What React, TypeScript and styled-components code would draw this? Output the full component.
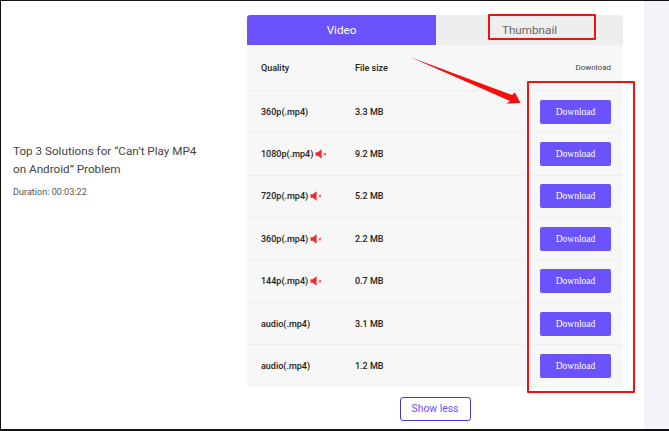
import React from "react";
import styled, { createGlobalStyle } from "styled-components";

const Global = createGlobalStyle`
  html, body { margin: 0; padding: 0; background: #fff; }
  * { box-sizing: border-box; }
`;

const Frame = styled.div`
  position: relative;
  width: 669px;
  height: 431px;
  overflow: hidden;
  display: flex;
  background: #fff;
  border-top: 1px solid #111;
  border-left: 1px solid #111;
  border-bottom: 2px solid #111;
  font-family: Roboto, "Liberation Sans", sans-serif;
`;

const Info = styled.div`
  width: 246px;
  flex: none;
  padding: 142px 40px 0 12px;
`;

const Title = styled.div`
  font-size: 11.7px;
  line-height: 17.5px;
  color: #444;
`;

const Duration = styled.div`
  margin-top: 8px;
  font-size: 9.1px;
  line-height: 12px;
  color: #555;
`;

const Main = styled.div`
  width: 376px;
  flex: none;
  padding-top: 14px;
  display: flex;
  flex-direction: column;
`;

const Tabs = styled.div`
  display: flex;
  height: 30px;
  border-radius: 3px 3px 0 0;
  overflow: hidden;
`;

const Tab = styled.div<{ $active?: boolean }>`
  flex: none;
  width: ${(p) => (p.$active ? "189px" : "187px")};
  display: flex;
  align-items: center;
  justify-content: center;
  font-size: 11.7px;
  color: ${(p) => (p.$active ? "#fff" : "#666")};
  background: ${(p) => (p.$active ? "#6a52fd" : "#eeeeee")};
`;

const Table = styled.div`
  background: #f7f7f7;
  border-radius: 0 0 3px 3px;
`;

const Row = styled.div<{ $head?: boolean }>`
  display: grid;
  grid-template-columns: 94px 1fr auto;
  align-items: center;
  height: ${(p) => (p.$head ? "45px" : "42.4px")};
  padding: 0 12px 0 14px;
  font-size: 9px;
  font-weight: 500;
  color: #222;
  border-top: ${(p) => (p.$head ? "none" : "1px solid #efefef")};
`;

const Quality = styled.div`
  display: flex;
  align-items: center;
  gap: 2px;
`;

const HeadAction = styled.div`
  font-size: 8px;
  font-weight: 400;
  color: #444;
`;

const DownloadButton = styled.button`
  width: 71px;
  height: 24px;
  border: none;
  border-radius: 2px;
  background: #6a52fd;
  color: #fff;
  font-family: "Liberation Serif", serif;
  font-size: 9.5px;
  padding: 0;
`;

const Footer = styled.div`
  display: flex;
  justify-content: center;
  padding-top: 10px;
`;

const ShowLess = styled.button`
  width: 71px;
  height: 24px;
  border: 1.5px solid #4a3bd0;
  border-radius: 3px;
  background: #fff;
  color: #6a52fd;
  font-family: Roboto, sans-serif;
  font-size: 10.4px;
  padding: 0;
`;

const SideStrip = styled.div`
  margin-left: 21px;
  flex: 1;
  background: #f3f4f9;
`;

const Mark = styled.div<{ $x: number; $y: number; $w: number; $h: number }>`
  position: absolute;
  left: ${(p) => p.$x}px;
  top: ${(p) => p.$y}px;
  width: ${(p) => p.$w}px;
  height: ${(p) => p.$h}px;
  border: 2px solid #f50f0f;
  border-radius: 1px;
`;

const Arrow = styled.svg`
  position: absolute;
  left: 400px;
  top: 50px;
`;

const Muted = () => (
  <svg width="13" height="10" viewBox="0 0 13 10">
    <path d="M0.5 3.2H2.8L6.6 0.3V9.7L2.8 6.8H0.5Z" fill="#ea2b2b" />
    <path d="M8.6 4l2.4 2.4M11 4L8.6 6.4" stroke="#ea2b2b" strokeWidth="0.9" fill="none" />
  </svg>
);

const rows = [
  { q: "360p(.mp4)", s: "3.3 MB", m: false },
  { q: "1080p(.mp4)", s: "9.2 MB", m: true },
  { q: "720p(.mp4)", s: "5.2 MB", m: true },
  { q: "360p(.mp4)", s: "2.2 MB", m: true },
  { q: "144p(.mp4)", s: "0.7 MB", m: true },
  { q: "audio(.mp4)", s: "3.1 MB", m: false },
  { q: "audio(.mp4)", s: "1.2 MB", m: false },
];

export default function App() {
  return (
    <Frame>
      <Global />
      <Info>
        <Title>Top 3 Solutions for “Can’t Play MP4 on Android” Problem</Title>
        <Duration>Duration: 00:03:22</Duration>
      </Info>
      <Main>
        <Tabs>
          <Tab $active>Video</Tab>
          <Tab>Thumbnail</Tab>
        </Tabs>
        <Table>
          <Row $head>
            <div>Quality</div>
            <div>File size</div>
            <HeadAction>Download</HeadAction>
          </Row>
          {rows.map((r, i) => (
            <Row key={i}>
              <Quality>
                {r.q}
                {r.m && <Muted />}
              </Quality>
              <div>{r.s}</div>
              <DownloadButton>Download</DownloadButton>
            </Row>
          ))}
        </Table>
        <Footer>
          <ShowLess>Show less</ShowLess>
        </Footer>
      </Main>
      <SideStrip />
      <Mark $x={487} $y={13} $w={108} $h={26} />
      <Mark $x={526} $y={80} $w={108} $h={312} />
      <Arrow width="125" height="60" viewBox="0 0 125 60">
        <path d="M9 6L111 44L114 41.5L119.5 52L105.5 52.5L109 50Z" fill="#f50f0f" />
      </Arrow>
    </Frame>
  );
}
